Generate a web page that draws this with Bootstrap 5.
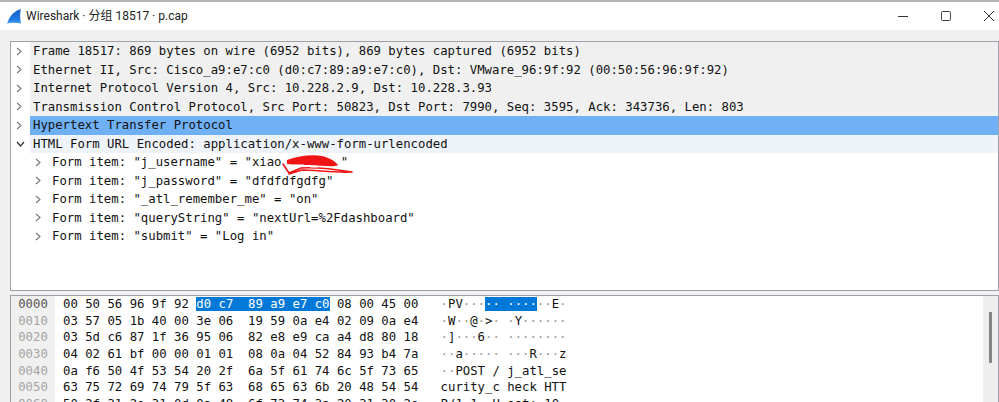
<!DOCTYPE html>
<html lang="zh">
<head>
<meta charset="utf-8">
<link rel="stylesheet" href="https://cdn.jsdelivr.net/npm/bootstrap@5.3.0/dist/css/bootstrap.min.css">
<style>
html,body{height:402px;overflow:hidden;margin:0;background:#f0f0f0}
.ws-win{height:402px;overflow:hidden;border-top:2px solid #b4b4b4;font-family:"DejaVu Sans Mono","Liberation Mono",monospace;font-size:12.3px;color:#111}
.ws-title{height:28px;flex:none;background:#fff;font-family:Roboto,"Noto Sans CJK SC",sans-serif;font-size:12px;color:#222;padding-left:7px;gap:5px}
.ws-ctl{margin-left:auto;gap:33px;padding-right:5px}
.ws-body{padding:11px 0 0 10px;min-height:0}
.ws-tree{height:250px;background:#fff;border:1px solid #a0a0a8;position:relative}
.ws-row{height:18.5px;line-height:18.5px;white-space:pre;align-items:center}
.ws-row span.ws-txt{flex:1;padding-left:3px;height:18.5px}
.ws-arrow{width:19px;flex:none;padding-left:5px;display:flex;align-items:center}
.ws-ind .ws-arrow{width:38px;padding-left:24px}
.ws-top .ws-txt{background:#f0f0f0}
.ws-sel .ws-txt{background:#70b0f5}
.ws-exp .ws-txt{background:#eef3f9}
.ws-hex{height:120px;margin-top:4px;background:#fff;border:1px solid #a0a0a8;border-bottom:0;overflow:hidden}
.ws-off{width:44px;flex:none;background:#f0f0f0;color:#a4a4a4;text-align:center}
.ws-off div:first-child{color:#555}
.ws-hr{height:16.7px;line-height:16.7px;white-space:pre;padding-left:8px}
.ws-hl{background:#0078d7;color:#fff}
.ws-hl .ws-dot{color:#fff}
.ws-dot{color:#999}
.ws-sb{width:15px;flex:none;background:#eee;display:flex;justify-content:center;padding-top:16px}
.ws-thumb{width:3px;height:51px;background:#858585}
.ws-ink{position:absolute;left:269px;top:110px;pointer-events:none}
</style>
</head>
<body>
<div class="ws-win d-flex flex-column">
  <div class="ws-title d-flex align-items-center">
    <svg width="14" height="15" viewBox="0 0 14 15"><defs><linearGradient id="fin" x1="0" y1="0" x2="0" y2="1"><stop offset="0" stop-color="#1560c8"/><stop offset=".7" stop-color="#1f78e0"/><stop offset="1" stop-color="#4aa2f0"/></linearGradient></defs><path d="M0 14.5C2 10 4 3 13.8 0C12.8 5 13 10 14 14.5C9 13.6 4 13.6 0 14.5Z" fill="url(#fin)"/></svg>
    <span>Wireshark · 分组 18517 · p.cap</span>
    <div class="ws-ctl d-flex align-items-center">
      <svg width="10" height="10" viewBox="0 0 10 10"><path d="M0 5.5H10" stroke="#333" stroke-width="1"/></svg>
      <svg width="10" height="10" viewBox="0 0 10 10"><rect x=".5" y=".5" width="9" height="9" rx="1" fill="none" stroke="#444" stroke-width="1"/></svg>
      <svg width="10" height="10" viewBox="0 0 10 10"><path d="M0 0L10 10M10 0L0 10" stroke="#333" stroke-width="1"/></svg>
    </div>
  </div>
  <div class="ws-body flex-grow-1">
    <div class="ws-tree">
      <div class="ws-row d-flex ws-top"><span class="ws-arrow"><svg width="6" height="9" viewBox="0 0 6 9"><path d="M1 1L5 4.5L1 8" fill="none" stroke="#777" stroke-width="1.1"/></svg></span><span class="ws-txt">Frame 18517: 869 bytes on wire (6952 bits), 869 bytes captured (6952 bits)</span></div>
      <div class="ws-row d-flex ws-top"><span class="ws-arrow"><svg width="6" height="9" viewBox="0 0 6 9"><path d="M1 1L5 4.5L1 8" fill="none" stroke="#777" stroke-width="1.1"/></svg></span><span class="ws-txt">Ethernet II, Src: Cisco_a9:e7:c0 (d0:c7:89:a9:e7:c0), Dst: VMware_96:9f:92 (00:50:56:96:9f:92)</span></div>
      <div class="ws-row d-flex ws-top"><span class="ws-arrow"><svg width="6" height="9" viewBox="0 0 6 9"><path d="M1 1L5 4.5L1 8" fill="none" stroke="#777" stroke-width="1.1"/></svg></span><span class="ws-txt">Internet Protocol Version 4, Src: 10.228.2.9, Dst: 10.228.3.93</span></div>
      <div class="ws-row d-flex ws-top"><span class="ws-arrow"><svg width="6" height="9" viewBox="0 0 6 9"><path d="M1 1L5 4.5L1 8" fill="none" stroke="#777" stroke-width="1.1"/></svg></span><span class="ws-txt">Transmission Control Protocol, Src Port: 50823, Dst Port: 7990, Seq: 3595, Ack: 343736, Len: 803</span></div>
      <div class="ws-row d-flex ws-sel"><span class="ws-arrow"><svg width="6" height="9" viewBox="0 0 6 9"><path d="M1 1L5 4.5L1 8" fill="none" stroke="#777" stroke-width="1.1"/></svg></span><span class="ws-txt">Hypertext Transfer Protocol</span></div>
      <div class="ws-row d-flex ws-exp"><span class="ws-arrow"><svg width="9" height="6" viewBox="0 0 9 6"><path d="M1 1L4.5 5L8 1" fill="none" stroke="#333" stroke-width="1.2"/></svg></span><span class="ws-txt">HTML Form URL Encoded: application/x-www-form-urlencoded</span></div>
      <div class="ws-row d-flex ws-ind"><span class="ws-arrow"><svg width="6" height="9" viewBox="0 0 6 9"><path d="M1 1L5 4.5L1 8" fill="none" stroke="#777" stroke-width="1.1"/></svg></span><span class="ws-txt">Form item: "j_username" = "xiao        "</span></div>
      <div class="ws-row d-flex ws-ind"><span class="ws-arrow"><svg width="6" height="9" viewBox="0 0 6 9"><path d="M1 1L5 4.5L1 8" fill="none" stroke="#777" stroke-width="1.1"/></svg></span><span class="ws-txt">Form item: "j_password" = "dfdfdfgdfg"</span></div>
      <div class="ws-row d-flex ws-ind"><span class="ws-arrow"><svg width="6" height="9" viewBox="0 0 6 9"><path d="M1 1L5 4.5L1 8" fill="none" stroke="#777" stroke-width="1.1"/></svg></span><span class="ws-txt">Form item: "_atl_remember_me" = "on"</span></div>
      <div class="ws-row d-flex ws-ind"><span class="ws-arrow"><svg width="6" height="9" viewBox="0 0 6 9"><path d="M1 1L5 4.5L1 8" fill="none" stroke="#777" stroke-width="1.1"/></svg></span><span class="ws-txt">Form item: "queryString" = "nextUrl=%2Fdashboard"</span></div>
      <div class="ws-row d-flex ws-ind"><span class="ws-arrow"><svg width="6" height="9" viewBox="0 0 6 9"><path d="M1 1L5 4.5L1 8" fill="none" stroke="#777" stroke-width="1.1"/></svg></span><span class="ws-txt">Form item: "submit" = "Log in"</span></div>
      <svg class="ws-ink" width="76" height="24" viewBox="0 0 76 24"><path d="M7 8C18 4 32 2 42 4C50 6 55 9 58 13C52 16 40 13 30 13C22 13 14 13 7 12Z" fill="#f01414"/><path d="M3 12L9 21L21 16C36 15 54 17 72 20C54 21 36 18 22 18L9 22" fill="none" stroke="#f01414" stroke-width="1.6" stroke-linejoin="round" stroke-linecap="round"/><path d="M14 13H24M30 15H38" stroke="#fff" stroke-width="1"/></svg>
    </div>
    <div class="ws-hex d-flex">
      <div class="ws-off">
        <div class="ws-hr p-0">0000</div><div class="ws-hr p-0">0010</div><div class="ws-hr p-0">0020</div><div class="ws-hr p-0">0030</div><div class="ws-hr p-0">0040</div><div class="ws-hr p-0">0050</div><div class="ws-hr p-0">0060</div>
      </div>
      <div class="flex-grow-1">
        <div class="ws-hr">00 50 56 96 9f 92 <span class="ws-hl">d0 c7  89 a9 e7 c0</span> 08 00 45 00   <span class="ws-dot">·</span>PV<span class="ws-dot">···</span><span class="ws-hl"><span class="ws-dot">·· ····</span></span><span class="ws-dot">··</span>E<span class="ws-dot">·</span></div>
        <div class="ws-hr">03 57 05 1b 40 00 3e 06  19 59 0a e4 02 09 0a e4   <span class="ws-dot">·</span>W<span class="ws-dot">··</span>@<span class="ws-dot">·</span>&gt;<span class="ws-dot">·</span> <span class="ws-dot">·</span>Y<span class="ws-dot">······</span></div>
        <div class="ws-hr">03 5d c6 87 1f 36 95 06  82 e8 e9 ca a4 d8 80 18   <span class="ws-dot">·</span>]<span class="ws-dot">···</span>6<span class="ws-dot">·· ········</span></div>
        <div class="ws-hr">04 02 61 bf 00 00 01 01  08 0a 04 52 84 93 b4 7a   <span class="ws-dot">··</span>a<span class="ws-dot">····· ···</span>R<span class="ws-dot">···</span>z</div>
        <div class="ws-hr">0a f6 50 4f 53 54 20 2f  6a 5f 61 74 6c 5f 73 65   <span class="ws-dot">··</span>POST / j_atl_se</div>
        <div class="ws-hr">63 75 72 69 74 79 5f 63  68 65 63 6b 20 48 54 54   curity_c heck HTT</div>
        <div class="ws-hr">50 2f 31 2e 31 0d 0a 48  6f 73 74 3a 20 31 30 2e   P/1.1<span class="ws-dot">··</span>H ost: 10.</div>
      </div>
      <div class="ws-sb"><div class="ws-thumb"></div></div>
    </div>
  </div>
</div>
<script src="https://cdn.jsdelivr.net/npm/bootstrap@5.3.0/dist/js/bootstrap.bundle.min.js"></script>
</body>
</html>
